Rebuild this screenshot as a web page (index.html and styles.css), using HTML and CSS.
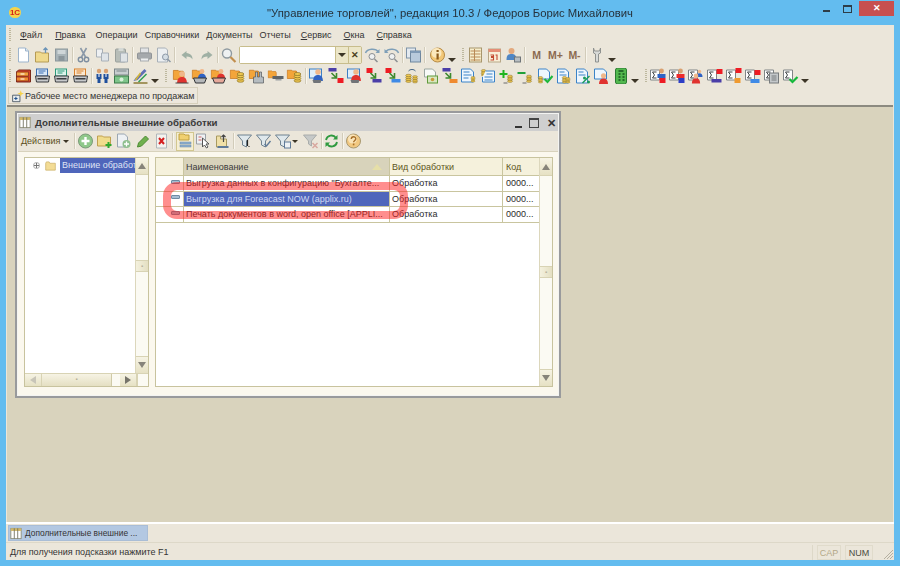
FILE: index.html
```html
<!DOCTYPE html>
<html lang="ru">
<head>
<meta charset="utf-8">
<title>Управление торговлей</title>
<link rel="stylesheet" href="styles.css">
</head>
<body>
<svg class="sprite" xmlns="http://www.w3.org/2000/svg">
<defs>
<symbol id="doc" viewBox="0 0 16 16"><path d="M3 1h7l3 3v11H3z" fill="#fff" stroke="#9db4cc"/><path d="M10 1v3h3" fill="#dfe8f0" stroke="#9db4cc"/></symbol>
<symbol id="open" viewBox="0 0 16 16"><path d="M1 5h5l1 1h7v9H1z" fill="#f0d98c" stroke="#b59a55"/><path d="M11 1v5M9 3l2-2 2 2" fill="none" stroke="#6b94b8" stroke-width="1.3"/></symbol>
<symbol id="save" viewBox="0 0 16 16"><rect x="2" y="2" width="12" height="12" fill="#a9b4b8" stroke="#8c979c"/><rect x="4" y="3" width="8" height="4" fill="#cfd6d8"/><rect x="5" y="9" width="6" height="5" fill="#8b969b"/></symbol>
<symbol id="cut" viewBox="0 0 16 16"><path d="M5 1l5 9M11 1L6 10" stroke="#8b99a8" stroke-width="1.6" fill="none"/><circle cx="5" cy="12.5" r="2.2" fill="none" stroke="#7e8ea0" stroke-width="1.4"/><circle cx="11" cy="12.5" r="2.2" fill="none" stroke="#7e8ea0" stroke-width="1.4"/></symbol>
<symbol id="copy" viewBox="0 0 16 16"><path d="M2 2h6v8H2z" fill="#eef0f2" stroke="#a8b0b8"/><path d="M7 6h7v8H7z" fill="#dfe4e8" stroke="#a8b0b8"/></symbol>
<symbol id="paste" viewBox="0 0 16 16"><rect x="2" y="2" width="10" height="13" rx="1" fill="#b7bdb8" stroke="#9aa09c"/><rect x="5" y="1" width="5" height="3" fill="#d5d9d6"/><path d="M7 6h7v9H7z" fill="#dfe3e6" stroke="#a8b0b8"/></symbol>
<symbol id="print" viewBox="0 0 16 16"><rect x="4" y="1" width="8" height="5" fill="#e2e4e6" stroke="#a7abae"/><rect x="1" y="6" width="14" height="6" rx="1" fill="#a5a9ac" stroke="#909497"/><rect x="4" y="11" width="8" height="3" fill="#eceeef" stroke="#a7abae"/></symbol>
<symbol id="prev" viewBox="0 0 16 16"><path d="M2 1h8l2 2v12H2z" fill="#eceff1" stroke="#a8b0b8"/><circle cx="10" cy="10" r="3" fill="#d4dde4" stroke="#8b98a5"/><path d="M12 12l3 3" stroke="#8b98a5" stroke-width="1.5"/></symbol>
<symbol id="undo" viewBox="0 0 16 16"><path d="M7 4L2 8l5 4V9.500c3 0 5 1 6 3 0-4-2-6-6-6.500z" fill="#9fb0a4"/></symbol>
<symbol id="redo" viewBox="0 0 16 16"><path d="M9 4l5 4-5 4V9.500c-3 0-5 1-6 3 0-4 2-6 6-6.500z" fill="#9fb0a4"/></symbol>
<symbol id="find" viewBox="0 0 16 16"><circle cx="6.500" cy="6.500" r="4.500" fill="#eef1f2" stroke="#8f9aa0" stroke-width="1.400"/><path d="M10 10l5 5" stroke="#c28f4e" stroke-width="2.200"/></symbol>
<symbol id="fnext" viewBox="0 0 16 16"><path d="M1 6a7 5 0 0 1 13-1" fill="none" stroke="#7e9fb8" stroke-width="1.500"/><path d="M15 2v4h-4z" fill="#7e9fb8"/><circle cx="7.500" cy="9.500" r="3" fill="#eef1f2" stroke="#8b8f92"/><path d="M10 12l3 3" stroke="#8b8f92" stroke-width="1.500"/></symbol>
<symbol id="fprev" viewBox="0 0 16 16"><path d="M15 6A7 5 0 0 0 2 5" fill="none" stroke="#7e9fb8" stroke-width="1.500"/><path d="M1 2v4h4z" fill="#7e9fb8"/><circle cx="8.500" cy="9.500" r="3" fill="#eef1f2" stroke="#8b8f92"/><path d="M11 12l3 3" stroke="#8b8f92" stroke-width="1.500"/></symbol>
<symbol id="wins" viewBox="0 0 16 16"><rect x="1" y="1" width="9" height="10" fill="#e4eaf0" stroke="#7f93a8"/><rect x="5" y="4" width="10" height="11" fill="#b8cadb" stroke="#6f879e"/><rect x="5" y="4" width="10" height="2" fill="#7f9ab5"/></symbol>
<symbol id="info" viewBox="0 0 16 16"><circle cx="8" cy="8" r="7" fill="#f2c777" stroke="#b68a44"/><circle cx="7" cy="6" r="5" fill="#fbe8bd"/><rect x="7" y="3" width="2.200" height="2" fill="#8b5a1b"/><rect x="7" y="6.500" width="2.200" height="6" fill="#8b5a1b"/></symbol>
<symbol id="sheet" viewBox="0 0 16 16"><rect x="2" y="1" width="12" height="14" fill="#f6eecd" stroke="#a8966c"/><path d="M3 4h10M3 7h10M3 10h10M3 13h10M7 2v12" stroke="#b98a56"/></symbol>
<symbol id="cal" viewBox="0 0 16 16"><rect x="2" y="2" width="12" height="13" fill="#f8eed8" stroke="#b8a888"/><rect x="2" y="2" width="12" height="3" fill="#e58e76"/><path d="M4 8h3v1.500H5v1h2V13H4M9 8h1.500v5" fill="none" stroke="#c34a32" stroke-width="1.100"/></symbol>
<symbol id="ulock" viewBox="0 0 16 16"><circle cx="6" cy="4" r="3" fill="#e3a97d"/><path d="M1 13c0-5 2-6 5-6s5 1 5 6z" fill="#4f86c4"/><rect x="9" y="10" width="6" height="5" fill="#b8bec2" stroke="#6f7478"/></symbol>
<symbol id="tool" viewBox="0 0 16 16"><path d="M4 1v5l2 1v8h3V7l2-1V1l-1 3H5z" fill="#d8dad8" stroke="#8f9290"/></symbol>

<symbol id="cab" viewBox="0 0 16 16"><path d="M3 2h12v12H1V4z" fill="#d9462a" stroke="#7c2a1a"/><rect x="1" y="4" width="12" height="4" fill="#f2a13c" stroke="#7c2a1a" stroke-width=".7"/><rect x="1" y="9" width="12" height="4" fill="#ef8a2f" stroke="#7c2a1a" stroke-width=".7"/><rect x="5" y="5.500" width="4" height="1" fill="#fff"/><rect x="5" y="10.500" width="4" height="1" fill="#fff"/></symbol>
<symbol id="pr1" viewBox="0 0 16 16"><rect x="2" y="1" width="11" height="7" fill="#d8e8f8" stroke="#3a6db0"/><path d="M4 3h7M4 5h5" stroke="#3a6db0"/><path d="M1 8h14l-1 6H2z" fill="#c7c9cb" stroke="#3a3d40"/><rect x="3" y="10" width="10" height="1.500" fill="#3a3d40"/></symbol>
<symbol id="pr2" viewBox="0 0 16 16"><rect x="2" y="1" width="11" height="7" fill="#dcf3ea" stroke="#2a9a7a"/><path d="M4 3h7M4 5h5" stroke="#2a9a7a"/><path d="M1 8h14l-1 6H2z" fill="#c7c9cb" stroke="#3a3d40"/><rect x="3" y="10" width="10" height="1.500" fill="#3a3d40"/></symbol>
<symbol id="pr3" viewBox="0 0 16 16"><rect x="2" y="1" width="11" height="7" fill="#fbe8d0" stroke="#d9802a"/><path d="M4 3h7M4 5h5" stroke="#d9802a"/><path d="M1 8h14l-1 6H2z" fill="#c7c9cb" stroke="#3a3d40"/><rect x="3" y="10" width="10" height="1.500" fill="#3a3d40"/></symbol>
<symbol id="ppl" viewBox="0 0 16 16"><circle cx="4.500" cy="3" r="2.200" fill="#d9a070"/><circle cx="11.500" cy="3" r="2.200" fill="#d9a070"/><path d="M2 6h5v5H6v4H3v-4H2zM9 6h5v5h-1v4h-3v-4H9z" fill="#1f4f9c"/><path d="M4 6h1v3H4zM11 6h1v3h-1z" fill="#fff"/></symbol>
<symbol id="money" viewBox="0 0 16 16"><rect x="1" y="1" width="14" height="6" fill="#c9ced0" stroke="#7b8588"/><rect x="1" y="8" width="14" height="7" fill="#7fc48a" stroke="#3a7a48"/><circle cx="8" cy="11.500" r="2" fill="#d7f0d8"/><path d="M3 3h10" stroke="#7b8588"/></symbol>
<symbol id="sign" viewBox="0 0 16 16"><path d="M1 13l4-1 9-9-2-2-9 9z" fill="#5f6fb5"/><path d="M6 14l8-8" stroke="#2a9c52" stroke-width="1.500"/><path d="M1 15h14" stroke="#8b7a36" stroke-width="1.500"/><path d="M3 12l5-7" stroke="#d6b834" stroke-width="1.500"/></symbol>
<symbol id="pers" viewBox="0 0 16 16"><circle cx="8" cy="5" r="3.400" fill="#f0b78a"/><path d="M2 16c0-5 2-7.500 6-7.500s6 2.500 6 7.500z" fill="#e0332f"/></symbol>
<symbol id="persb" viewBox="0 0 16 16"><circle cx="8" cy="5" r="3.400" fill="#f0b78a"/><path d="M2 16c0-5 2-7.500 6-7.500s6 2.500 6 7.500z" fill="#2f62c4"/></symbol>
<symbol id="fold" viewBox="0 0 16 16"><path d="M1 3h6l1 1h5l1 2v8H1z" fill="#f3a53a" stroke="#c97a20"/></symbol>
<symbol id="coins" viewBox="0 0 16 16"><g fill="#f0c850" stroke="#7a6420" stroke-width=".8"><ellipse cx="8" cy="13" rx="4.500" ry="2"/><ellipse cx="8" cy="10" rx="4.500" ry="2"/><ellipse cx="8" cy="7" rx="4.500" ry="2"/><ellipse cx="8" cy="4" rx="4.500" ry="2"/></g></symbol>
<symbol id="a1" viewBox="0 0 16 16"><use href="#fold" width="13" height="13"/><use href="#pers" x="3" y="2" width="13" height="13"/><path d="M3 15h13" stroke="#444"/></symbol>
<symbol id="a2" viewBox="0 0 16 16"><use href="#fold" width="12" height="12"/><use href="#persb" x="5" y="0" width="11" height="11"/><path d="M2 10h13l-2 5H4z" fill="#b5b8ba" stroke="#303336"/></symbol>
<symbol id="a3" viewBox="0 0 16 16"><use href="#fold" width="12" height="12"/><use href="#pers" x="5" y="0" width="11" height="11"/><path d="M2 10h13l-2 5H4z" fill="#e6a89a" stroke="#303336"/></symbol>
<symbol id="a4" viewBox="0 0 16 16"><use href="#fold" width="12" height="12"/><use href="#coins" x="5" y="3" width="12" height="12"/></symbol>
<symbol id="a5" viewBox="0 0 16 16"><use href="#fold" width="12" height="12"/><path d="M5 15V9h2V4h2v5h2V4h2v5h2v6z" fill="#b5bcc0" stroke="#54595c" stroke-width=".7"/></symbol>
<symbol id="a6" viewBox="0 0 16 16"><use href="#fold" width="10" height="12"/><rect x="5" y="8" width="11" height="3" fill="#5e6468"/><rect x="8" y="11" width="6" height="1.500" fill="#9da2a6"/></symbol>
<symbol id="b1" viewBox="0 0 16 16"><rect x="1" y="1" width="12" height="9" fill="#dfeefa" stroke="#3d7fc4"/><use href="#persb" x="3" y="0" width="13" height="13"/><path d="M4 12h9l-1 3H5z" fill="#707478"/></symbol>
<symbol id="b2" viewBox="0 0 16 16"><rect x="1" y="0" width="8" height="3.500" fill="#4b3ea8"/><path d="M4 5l5 5M9 5v5H4" fill="none" stroke="#3d8a2f" stroke-width="1.600"/><rect x="10" y="10" width="6" height="5" fill="#ee1c24"/></symbol>
<symbol id="b3" viewBox="0 0 16 16"><rect x="1" y="1" width="12" height="9" fill="#dfeefa" stroke="#3d7fc4"/><use href="#pers" x="3" y="0" width="13" height="13"/><path d="M4 12h9l-1 3H5z" fill="#707478"/></symbol>
<symbol id="b4" viewBox="0 0 16 16"><rect x="1" y="0" width="6" height="5" fill="#ee1c24"/><path d="M5 5l5 5M10 5v5H5" fill="none" stroke="#3d8a2f" stroke-width="1.600"/><rect x="7" y="11" width="9" height="3.500" fill="#4b3ea8"/></symbol>
<symbol id="b5" viewBox="0 0 16 16"><rect x="1" y="0" width="6" height="5" fill="#ee1c24"/><path d="M5 5l5 5M10 5v5H5" fill="none" stroke="#3d8a2f" stroke-width="1.600"/><rect x="7" y="11" width="9" height="3.500" fill="#3f8ae6"/></symbol>
<symbol id="b6" viewBox="0 0 16 16"><path d="M5 3a4 3 0 0 1 7 0" fill="none" stroke="#4a6a88"/><use href="#coins" x="0" y="4" width="10" height="12"/><use href="#coins" x="7" y="6" width="9" height="10"/></symbol>
<symbol id="b7" viewBox="0 0 16 16"><path d="M2 1h8l3 3v5H2z" fill="#f8faf8" stroke="#9aa6a0"/><rect x="5" y="8" width="10" height="7" fill="#d8e6c0" stroke="#5f9a3a"/><circle cx="10" cy="11.500" r="1.800" fill="#c89a3a"/></symbol>
<symbol id="b8" viewBox="0 0 16 16"><rect x="1" y="0" width="8" height="3.500" fill="#4b3ea8"/><path d="M4 5l5 5M9 5v5H4" fill="none" stroke="#3d8a2f" stroke-width="1.600"/><rect x="8" y="11" width="8" height="4" fill="#ef8a2f"/></symbol>
<symbol id="d1" viewBox="0 0 16 16"><path d="M1 1h9l3 3v10H1z" fill="#eef6fd" stroke="#3b83c8"/><path d="M3 4h6M3 7h8M3 10h5" stroke="#3b83c8"/><use href="#coins" x="9" y="7" width="7" height="8"/></symbol>
<symbol id="d2" viewBox="0 0 16 16"><use href="#coins" x="0" y="0" width="8" height="9"/><path d="M6 3h9v11H3V9" fill="#eef6fd" stroke="#3b83c8"/><path d="M7 6h6M5 9h8M5 12h8" stroke="#3b83c8"/></symbol>
<symbol id="d3" viewBox="0 0 16 16"><path d="M1 5h3V2h2v3h3v2H6v3H4V7H1z" fill="#1fb51f"/><use href="#coins" x="7" y="5" width="9" height="11"/><path d="M5 15h4" stroke="#6a6a6a"/></symbol>
<symbol id="d4" viewBox="0 0 16 16"><rect x="0" y="4" width="8" height="2" fill="#1fa03a"/><use href="#coins" x="7" y="5" width="9" height="11"/><path d="M5 15h4" stroke="#6a6a6a"/></symbol>
<symbol id="d5" viewBox="0 0 16 16"><path d="M2 1h8l3 3v7H2z" fill="#eef6fd" stroke="#3b83c8"/><use href="#coins" x="0" y="7" width="8" height="9"/><path d="M8 11l3 3 5-6" fill="none" stroke="#1eb83c" stroke-width="2"/></symbol>
<symbol id="d6" viewBox="0 0 16 16"><path d="M2 1h8l3 3v11H2z" fill="#eef6fd" stroke="#3b83c8"/><path d="M4 4h5M4 7h7" stroke="#3b83c8"/><use href="#coins" x="5" y="7" width="8" height="9"/><use href="#coins" x="9" y="8" width="7" height="8"/></symbol>
<symbol id="d7" viewBox="0 0 16 16"><path d="M2 1h8l3 3v11H2z" fill="#eef6fd" stroke="#3b83c8"/><path d="M4 4h5M4 7h7" stroke="#3b83c8"/><path d="M8 15l7-7" stroke="#1a9a5a" stroke-width="1.500"/><circle cx="10" cy="10" r="1.500" fill="#1a9a5a"/><circle cx="14" cy="14" r="1.500" fill="#1a9a5a"/></symbol>
<symbol id="d8" viewBox="0 0 16 16"><path d="M1 1h9l3 3v7H1z" fill="#eef6fd" stroke="#3b83c8"/><use href="#pers" x="4" y="4" width="12" height="12"/></symbol>
<symbol id="grn" viewBox="0 0 16 16"><rect x="3" y="0" width="11" height="16" rx="2" fill="#52b84e" stroke="#2a7a32"/><path d="M6 3h5M6 6h2M10 6h2M6 9h2M10 9h2M6 12h2M10 12h2" stroke="#19541f" stroke-width="1.300"/></symbol>
<symbol id="s0" viewBox="0 0 16 16"><path d="M1 2h9v10H1z" fill="#fdfdfd" stroke="#7f8486"/><path d="M7 4H3l2 3-2 3h4" fill="none" stroke="#404446"/></symbol>
<symbol id="s1" viewBox="0 0 16 16"><use href="#s0"/><circle cx="12" cy="3" r="2.400" fill="#d9a070"/><path d="M8 6h8v4H8z" fill="#2d63c6"/><rect x="10" y="10" width="6" height="5" fill="#ee1c24"/></symbol>
<symbol id="s2" viewBox="0 0 16 16"><use href="#s0"/><circle cx="12" cy="3" r="2.400" fill="#d9a070"/><path d="M8 6h8v4H8z" fill="#ee2c2c"/><rect x="10" y="10" width="6" height="5" fill="#2d3ec6"/></symbol>
<symbol id="s3" viewBox="0 0 16 16"><use href="#s0"/><use href="#persb" x="8" y="0" width="8" height="10"/><use href="#pers" x="3" y="4" width="11" height="12"/></symbol>
<symbol id="s4" viewBox="0 0 16 16"><use href="#s0"/><rect x="10" y="1" width="6" height="5" fill="#ee1c24"/><rect x="5" y="11" width="10" height="3.500" fill="#4b3ea8"/></symbol>
<symbol id="s5" viewBox="0 0 16 16"><use href="#s0"/><rect x="10" y="0" width="6" height="5" fill="#ee1c24"/><rect x="9" y="10" width="6" height="5" fill="#ef9a2f"/></symbol>
<symbol id="s6" viewBox="0 0 16 16"><use href="#s0"/><rect x="10" y="2" width="6" height="5" fill="#ee1c24"/><rect x="6" y="11" width="9" height="4" fill="#3f8ae6"/></symbol>
<symbol id="s7" viewBox="0 0 16 16"><use href="#s0"/><rect x="6" y="5" width="9" height="10" fill="#c4c8ca" stroke="#777b7d"/><path d="M8 8h5M8 10h5M8 12h5" stroke="#777b7d"/></symbol>
<symbol id="s8" viewBox="0 0 16 16"><use href="#s0"/><path d="M7 11l3 3 5-5" fill="none" stroke="#14b83a" stroke-width="2.200"/></symbol>

<symbol id="grid" viewBox="0 0 14 14"><rect x="1" y="1" width="12" height="12" fill="#fff" stroke="#8a8a72"/><rect x="1" y="1" width="12" height="3" fill="#d2b866"/><path d="M5 1v12M9 1v12" stroke="#6f6f5c"/></symbol>
<symbol id="wadd" viewBox="0 0 16 16"><circle cx="8" cy="8" r="7" fill="#8fc88a" stroke="#7a9a78"/><path d="M8 4v8M4 8h8" stroke="#fff" stroke-width="2.400"/></symbol>
<symbol id="wfadd" viewBox="0 0 16 16"><path d="M1 3h5l1 1h7v9H1z" fill="#f0dc8c" stroke="#c0a050"/><path d="M12 9v6M9 12h6" stroke="#2fa82f" stroke-width="2"/></symbol>
<symbol id="wcopy" viewBox="0 0 16 16"><path d="M2 1h7l3 3v10H2z" fill="#eef1f4" stroke="#9aa6b2"/><circle cx="11" cy="11" r="4" fill="#8fbf8f"/><path d="M11 8.500v5M8.500 11h5" stroke="#fff" stroke-width="1.300"/></symbol>
<symbol id="wedit" viewBox="0 0 16 16"><path d="M3 14l1-4 7-7 3 3-7 7z" fill="#6fb04e" stroke="#4d8a34"/></symbol>
<symbol id="wdel" viewBox="0 0 16 16"><path d="M3 1h10v14H3z" fill="#f3f3ef" stroke="#b0b6ba"/><path d="M5.500 5l5 6M10.500 5l-5 6" stroke="#d42020" stroke-width="2"/></symbol>
<symbol id="wtree" viewBox="0 0 16 16"><path d="M2 1h5l1 1h4v5H2z" fill="#f0d070" stroke="#c0a040"/><rect x="3" y="9" width="11" height="2" fill="#8fb0d0" stroke="#6a88a8" stroke-width=".5"/><rect x="3" y="12" width="11" height="2" fill="#8fb0d0" stroke="#6a88a8" stroke-width=".5"/></symbol>
<symbol id="wsel" viewBox="0 0 16 16"><path d="M1 1h9v10H1z" fill="#eef0f2" stroke="#9aa0a6"/><path d="M3 4h3M3 7h3" stroke="#d06060"/><path d="M7 5v9l2-2 2 3 1.500-1-2-3h3z" fill="#fff" stroke="#555"/></symbol>
<symbol id="wup" viewBox="0 0 16 16"><path d="M2 3h4v3h6v8H2z" fill="#f0e0a8" stroke="#a89a60"/><path d="M9 9V2M7 4l2-2 2 2" fill="none" stroke="#444" stroke-width="1.200"/><rect x="3" y="13" width="11" height="2" fill="#5f7a98"/></symbol>
<symbol id="wf1" viewBox="0 0 16 16"><path d="M1 2h14l-5 6v6l-4-2V8z" fill="#dfe8ec" stroke="#6f8290"/><path d="M11 7v6" stroke="#222" stroke-width="1.200"/><path d="M12.500 13v1" stroke="#222"/></symbol>
<symbol id="wf2" viewBox="0 0 16 16"><path d="M1 2h14l-5 6v6l-4-2V8z" fill="#dfe8ec" stroke="#6f8290"/><path d="M9 11l2 2 4-5" fill="none" stroke="#5f7a98" stroke-width="1.400"/></symbol>
<symbol id="wf3" viewBox="0 0 16 16"><path d="M1 2h14l-5 6v6l-4-2V8z" fill="#dfe8ec" stroke="#6f8290"/><rect x="10" y="9" width="6" height="6" fill="#eef2f4" stroke="#5f7a98"/></symbol>
<symbol id="wf4" viewBox="0 0 16 16"><path d="M1 2h13L9 8v5l-3-2V8z" fill="#c6c9c8" stroke="#a8acab"/><path d="M10 10l5 5M15 10l-5 5" stroke="#d8a8a0" stroke-width="1.500"/></symbol>
<symbol id="wref" viewBox="0 0 16 16"><path d="M2.500 7a5.500 5.500 0 0 1 10-2M13.500 9a5.500 5.500 0 0 1-10 2" fill="none" stroke="#2f9a3f" stroke-width="1.800"/><path d="M14 2v4.500H9.500zM2 14V9.500h4.500z" fill="#2f9a3f"/></symbol>
<symbol id="whelp" viewBox="0 0 16 16"><circle cx="8" cy="8" r="7" fill="#f2c880" stroke="#a89870"/><circle cx="7" cy="6" r="4.500" fill="#fae4b8"/><path d="M5.800 6c0-3 4.500-3 4.500-.3 0 1.800-2.200 1.800-2.200 3.600" fill="none" stroke="#a8702a" stroke-width="1.400"/><rect x="7.300" y="10.500" width="1.600" height="1.800" fill="#a8702a"/></symbol>
<symbol id="folder" viewBox="0 0 16 14"><path d="M1 3l1-2h4l1 2h8v10H1z" fill="#f3dc95" stroke="#c9ae63"/></symbol>
</defs>
</svg>

<div class="app">
  <header class="title">
    <span class="logo">1С</span>
    <span class="title-text">"Управление торговлей", редакция 10.3 / Федоров Борис Михайлович</span>
    <div class="wc">
      <span class="wc-min"></span>
      <span class="wc-max"></span>
      <span class="wc-close">✕</span>
    </div>
  </header>

  <div class="shell">
    <nav class="menu">
      <span class="handle"></span>
      <span class="mi mi-file"><u>Ф</u>айл</span>
      <span class="mi mi-edit"><u>П</u>равка</span>
      <span class="mi">Операции</span>
      <span class="mi">Справочники</span>
      <span class="mi">Документы</span>
      <span class="mi mi-rep">Отчеты</span>
      <span class="mi mi-win"><u>С</u>ервис</span>
      <span class="mi mi-win"><u>О</u>кна</span>
      <span class="mi mi-win"><u>С</u>правка</span>
    </nav>

    <div class="tb tb1">
      <span class="handle"></span>
      <svg class="b"><use href="#doc"/></svg>
      <svg class="b"><use href="#open"/></svg>
      <svg class="b"><use href="#save"/></svg>
      <span class="sep"></span>
      <svg class="b"><use href="#cut"/></svg>
      <svg class="b"><use href="#copy"/></svg>
      <svg class="b"><use href="#paste"/></svg>
      <span class="sep sep-1"></span>
      <svg class="b"><use href="#print"/></svg>
      <svg class="b"><use href="#prev"/></svg>
      <span class="sep sep-2"></span>
      <svg class="b"><use href="#undo"/></svg>
      <svg class="b"><use href="#redo"/></svg>
      <span class="sep"></span>
      <svg class="b"><use href="#find"/></svg>
      <div class="combo">
        <span class="combo-in"></span>
        <span class="combo-btn"><i class="arr"></i></span>
        <span class="combo-btn combo-x">✕</span>
      </div>
      <svg class="b"><use href="#fnext"/></svg>
      <svg class="b"><use href="#fprev"/></svg>
      <span class="sep"></span>
      <svg class="b"><use href="#wins"/></svg>
      <span class="sep sep-2"></span>
      <svg class="b"><use href="#info"/></svg>
      <span class="more"><i class="arr"></i></span>
      <span class="handle handle-mid h-2"></span>
      <svg class="b"><use href="#sheet"/></svg>
      <svg class="b"><use href="#cal"/></svg>
      <svg class="b"><use href="#ulock"/></svg>
      <span class="sep sep-1"></span>
      <span class="mem">М</span>
      <span class="mem">М+</span>
      <span class="mem">М-</span>
      <span class="sep sep-1"></span>
      <svg class="b"><use href="#tool"/></svg>
      <span class="more"><i class="arr"></i></span>
    </div>

    <div class="tb tb2">
      <span class="handle"></span>
      <svg class="b"><use href="#cab"/></svg>
      <svg class="b"><use href="#pr1"/></svg>
      <svg class="b"><use href="#pr2"/></svg>
      <svg class="b"><use href="#pr3"/></svg>
      <span class="sep"></span>
      <svg class="b"><use href="#ppl"/></svg>
      <svg class="b"><use href="#money"/></svg>
      <svg class="b"><use href="#sign"/></svg>
      <span class="more"><i class="arr"></i></span>
      <span class="handle handle-mid h-4"></span>
      <svg class="b"><use href="#a1"/></svg>
      <svg class="b"><use href="#a2"/></svg>
      <svg class="b"><use href="#a3"/></svg>
      <svg class="b"><use href="#a4"/></svg>
      <svg class="b"><use href="#a5"/></svg>
      <svg class="b"><use href="#a6"/></svg>
      <svg class="b"><use href="#a4"/></svg>
      <span class="sep"></span>
      <svg class="b"><use href="#b1"/></svg>
      <svg class="b"><use href="#b2"/></svg>
      <svg class="b"><use href="#b3"/></svg>
      <svg class="b"><use href="#b4"/></svg>
      <svg class="b"><use href="#b5"/></svg>
      <svg class="b"><use href="#b6"/></svg>
      <svg class="b"><use href="#b7"/></svg>
      <svg class="b"><use href="#b8"/></svg>
      <svg class="b"><use href="#d1"/></svg>
      <svg class="b"><use href="#d2"/></svg>
      <svg class="b"><use href="#d3"/></svg>
      <svg class="b"><use href="#d4"/></svg>
      <svg class="b"><use href="#d5"/></svg>
      <svg class="b"><use href="#d6"/></svg>
      <svg class="b"><use href="#d7"/></svg>
      <svg class="b"><use href="#d8"/></svg>
      <svg class="b"><use href="#grn"/></svg>
      <span class="more"><i class="arr"></i></span>
      <span class="handle handle-mid h-1"></span>
      <svg class="b"><use href="#s1"/></svg>
      <svg class="b"><use href="#s2"/></svg>
      <svg class="b"><use href="#s3"/></svg>
      <svg class="b"><use href="#s4"/></svg>
      <svg class="b"><use href="#s5"/></svg>
      <svg class="b"><use href="#s6"/></svg>
      <svg class="b"><use href="#s7"/></svg>
      <svg class="b"><use href="#s8"/></svg>
      <span class="more"><i class="arr"></i></span>
    </div>

    <div class="tabs">
      <div class="tab">
        <svg class="tab-ic" viewBox="0 0 16 16"><path d="M2 7h9v8H2z" fill="#e8ecee" stroke="#3c4a58"/><path d="M6 9v4M4 11h4" stroke="#1f4f8c" stroke-width="1.300"/><path d="M12 1l1 3 3 1-3 1-1 3-1-3-3-1 3-1z" fill="#f6d24a"/></svg>
        Рабочее место менеджера по продажам
      </div>
    </div>

    <main class="desk">
      <section class="win">
        <div class="win-title">
          <svg class="win-ic"><use href="#grid"/></svg>
          <span class="win-name">Дополнительные внешние обработки</span>
          <span class="wb-min"></span>
          <span class="wb-max"></span>
          <span class="wb-close">✕</span>
        </div>
        <div class="win-tb">
          <span class="actions">Действия <i class="arr arr-sm"></i></span>
          <span class="sep"></span>
          <svg class="b"><use href="#wadd"/></svg>
          <svg class="b"><use href="#wfadd"/></svg>
          <svg class="b"><use href="#wcopy"/></svg>
          <svg class="b"><use href="#wedit"/></svg>
          <svg class="b"><use href="#wdel"/></svg>
          <span class="sep"></span>
          <span class="pressed"><svg class="b"><use href="#wtree"/></svg></span>
          <svg class="b"><use href="#wsel"/></svg>
          <svg class="b"><use href="#wup"/></svg>
          <span class="sep"></span>
          <svg class="b"><use href="#wf1"/></svg>
          <svg class="b"><use href="#wf2"/></svg>
          <svg class="b"><use href="#wf3"/></svg>
          <i class="arr arr-sm"></i>
          <svg class="b wf4"><use href="#wf4"/></svg>
          <span class="sep"></span>
          <svg class="b wref"><use href="#wref"/></svg>
          <span class="sep"></span>
          <svg class="b"><use href="#whelp"/></svg>
        </div>

        <div class="win-body">
          <div class="tree">
            <div class="tree-main">
              <div class="tree-area">
                <div class="tree-row">
                  <span class="plus"></span>
                  <svg class="folder"><use href="#folder"/></svg>
                  <span class="tree-sel">Внешние обработки</span>
                </div>
              </div>
              <div class="vs vs-tree">
                <span class="vs-btn"><i class="tri-up"></i></span>
                <span class="vs-track vs-a"></span>
                <span class="vs-thumb"><b>▪</b></span>
                <span class="vs-track"></span>
                <span class="vs-btn vs-btn-d"><i class="tri-down"></i></span>
              </div>
            </div>
            <div class="hs">
              <span class="hs-btn"><i class="tri-left"></i></span>
              <span class="hs-thumb"><b>▪</b></span>
              <span class="hs-track"></span>
              <span class="hs-btn"><i class="tri-right"></i></span>
              <span class="hs-corner"></span>
            </div>
          </div>

          <div class="list">
            <div class="list-main">
              <div class="grid">
                <div class="row head">
                  <span class="c c0"></span>
                  <span class="c c1 sorted">Наименование<i class="sort"></i></span>
                  <span class="c c2">Вид обработки</span>
                  <span class="c c3">Код</span>
                </div>
                <div class="row">
                  <span class="c c0"><i class="mark"></i></span>
                  <span class="c c1">Выгрузка данных в конфигурацию "Бухгалте...</span>
                  <span class="c c2">Обработка</span>
                  <span class="c c3">0000...</span>
                </div>
                <div class="row r2">
                  <span class="c c0"><i class="mark"></i></span>
                  <span class="c c1 sel">Выгрузка для Foreacast NOW (applix.ru)</span>
                  <span class="c c2">Обработка</span>
                  <span class="c c3">0000...</span>
                </div>
                <div class="row">
                  <span class="c c0"><i class="mark"></i></span>
                  <span class="c c1">Печать документов в word, open office [APPLI...</span>
                  <span class="c c2">Обработка</span>
                  <span class="c c3">0000...</span>
                </div>
              </div>
              <div class="vs vs-list">
                <span class="vs-btn vs-btn-h"><i class="tri-up"></i></span>
                <span class="vs-track vs-b"></span>
                <span class="vs-thumb"><b>▪</b></span>
                <span class="vs-track"></span>
                <span class="vs-btn vs-btn-d"><i class="tri-down"></i></span>
              </div>
            </div>
          </div>
        </div>
        <div class="ring"></div>
      </section>
    </main>

    <div class="taskbar">
      <div class="task">
        <svg class="win-ic"><use href="#grid"/></svg>
        Дополнительные внешние ...
      </div>
    </div>
    <footer class="status">
      <span class="st-text">Для получения подсказки нажмите F1</span>
      <span class="st-box st-cap">CAP</span>
      <span class="st-box st-num">NUM</span>
      <svg class="grip" viewBox="0 0 12 12"><path d="M11 2L2 11M11 5l-6 6M11 8l-3 3" stroke="#b5b0a0" stroke-width="1"/></svg>
    </footer>
  </div>
</div>
</body>
</html>
```

FILE: styles.css
```css
* { box-sizing: border-box; }
html, body { margin: 0; padding: 0; }
body {
  width: 900px;
  height: 566px;
  overflow: hidden;
  background: #63bcef;
  font-family: "Liberation Sans", Arial, sans-serif;
  font-size: 9px;
  color: #2b2b2b;
}
.sprite { position: absolute; width: 0; height: 0; }

.app { display: flex; flex-direction: column; height: 566px; filter: blur(.35px); }

/* title bar */
.title {
  height: 25px;
  display: flex;
  align-items: center;
  justify-content: center;
  position: relative;
}
.title-text { font-size: 11.3px; color: #26323c; }
.logo {
  position: absolute;
  left: 9px;
  top: 7px;
  width: 12px;
  height: 11px;
  border-radius: 6px;
  background: #f5d44c;
  color: #d5221a;
  font-size: 8px;
  font-weight: bold;
  line-height: 11px;
  text-align: center;
}
.wc {
  position: absolute;
  right: 6px;
  top: 0;
  display: flex;
  align-items: flex-start;
}
.wc-min { width: 7px; height: 2px; background: #2d3d48; margin: 10px 13px 0 0; }
.wc-max { width: 9px; height: 8px; border: 1px solid #2d3d48; border-top-width: 2px; margin: 5px 7px 0 0; }
.wc-close {
  width: 35px;
  height: 15px;
  margin-top: 1px;
  background: #c75050;
  color: #fff;
  font-size: 9px;
  font-weight: bold;
  line-height: 15px;
  text-align: center;
}

/* main shell */
.shell {
  margin: 0 6px 6px 6px;
  height: 535px;
  background: #ebe6da;
  display: flex;
  flex-direction: column;
}

.menu { height: 20px; display: flex; align-items: center; padding-left: 3px; }
.mi { padding: 0 3.5px; color: #333; white-space: nowrap; }
.mi u { text-decoration: underline; }
.mi-file { margin-left: 5.5px; margin-right: 6px; }
.mi-edit { margin-right: 3px; }
.mi-rep { margin-right: 3px; }
.mi-win { margin-right: 5px; }

.handle {
  flex: none;
  width: 2px;
  height: 14px;
  background-image: linear-gradient(#bdb89e 50%, transparent 50%);
  background-size: 2px 2px;
}
.handle-mid { margin-left: 5px; }
.h-1 { margin-right: 1px; }
.h-2 { margin-right: 2px; }
.h-4 { margin-right: 4px; }

.tb { height: 21px; display: flex; align-items: center; padding-left: 3px; }
.tb > .handle:first-child { margin-right: 3px; }
.b { flex: none; width: 19px; height: 16px; }
.sep { flex: none; width: 1px; height: 16px; background: #d2ccba; margin: 0 1px; box-shadow: 1px 0 #f8f5ec; }
.sep-1 { margin-right: 2px; }
.sep-2 { margin-right: 3px; }
.more { flex: none; width: 10px; height: 16px; display: flex; align-items: flex-end; justify-content: center; padding-bottom: 1px; }
.arr { display: block; width: 0; height: 0; border: 4px solid transparent; border-bottom: 0; border-top: 4px solid #3c3526; }
.arr-sm { display: inline-block; flex: none; width: 6px; border-width: 3px; border-bottom: 0; border-top: 3px solid #3c3526; vertical-align: middle; }

.combo { display: flex; flex: none; height: 18px; margin: 0 1px; border: 1px solid #c8bd8c; border-radius: 2px; width: 123px; }
.combo-in { width: 97px; background: #fff; }
.combo-btn {
  width: 13px;
  background: #ece6c8;
  border-left: 1px solid #c8bd8c;
  display: flex;
  align-items: center;
  justify-content: center;
  color: #4a4020;
  font-size: 9px;
  font-weight: bold;
}
.combo-x { border-left: 1px solid #c8bd8c; }
.mem { flex: none; width: 19px; text-align: center; font-size: 10.5px; font-weight: bold; color: #8b6a50; white-space: nowrap; }

.tabs { height: 19px; padding: 1px 0 0 2px; display: flex; align-items: flex-start; }
.tab {
  height: 17px;
  width: 190px;
  display: flex;
  align-items: center;
  gap: 1px;
  padding-left: 2px;
  background: #ece7dc;
  border: 1px solid #d6d0bc;
  white-space: nowrap;
  color: #333;
}
.tab-ic { width: 13px; height: 14px; flex: none; }

/* desktop */
.desk {
  flex: none;
  height: 417px;
  margin: 0 1px;
  background: #d9d3bd;
  border-top: 2px solid #8c8a80;
  position: relative;
}
.win {
  position: absolute;
  left: 8px;
  top: 4px;
  width: 546px;
  height: 287px;
  background: #fbf8ee;
  border: 2px solid #999a9c;
  box-shadow: inset 0 0 0 1px #f4f4f2;
  padding: 1px;
}
.win-title {
  height: 17px;
  background: #cfcfcf;
  display: flex;
  align-items: center;
  padding-left: 1px;
}
.win-ic { width: 12px; height: 13px; flex: none; }
.win-name { margin-left: 4px; flex: 1; font-weight: bold; color: #3a3a3a; font-size: 9.7px; }
.wb-min { width: 7px; height: 2px; background: #333; margin: 9px 7px 0 0; }
.wb-max { width: 10px; height: 10px; border: 1px solid #444; border-top-width: 2px; margin-right: 7px; }
.wb-close { width: 11px; margin-right: 1px; text-align: center; color: #333; font-weight: bold; font-size: 11px; line-height: 14px; }

.win-tb {
  height: 21px;
  background: #ebe6da;
  border-bottom: 1px solid #d8d2bc;
  display: flex;
  align-items: center;
  padding-left: 3px;
}
.actions { width: 52px; flex: none; color: #5b4f20; white-space: nowrap; }
.pressed { display: flex; flex: none; height: 19px; align-items: center; background: #f5eed4; border: 1px solid #d2c78f; margin-left: 2px; }
.pressed .b { width: 16px; }
.wf4 { margin-left: 3px; }
.wref { margin-left: -1px; }

.win-body { display: flex; gap: 6px; padding: 5px 0 0 6px; }

.tree, .list { border: 1px solid #c8c39e; background: #fff; height: 230px; flex: none; }
.tree { width: 125px; display: flex; flex-direction: column; }
.list { width: 398px; }
.tree-main, .list-main { display: flex; flex: 1; height: 100%; }
.tree-main { height: 215px; flex: none; }
.tree-area { flex: 1; min-width: 0; overflow: hidden; }
.tree-row { height: 15px; display: flex; align-items: center; padding-left: 8px; white-space: nowrap; }
.plus {
  width: 7px;
  height: 7px;
  border: 1px solid #aaa;
  border-radius: 50%;
  flex: none;
  background:
    linear-gradient(#777, #777) center / 5px 1px no-repeat,
    linear-gradient(#777, #777) center / 1px 5px no-repeat;
}
.folder { width: 11px; height: 10px; margin: 0 4px 0 5px; flex: none; }
.tree-sel { background: #4f66bb; color: #dfe4f5; padding: 0 2px; line-height: 15px; display: block; }

.vs { width: 13px; flex: none; display: flex; flex-direction: column; background: #fbfaf3; border-left: 1px solid #dcd7bc; }
.vs-track { flex: 1; background: #fbfaf3; }
.vs-a { flex: 0 0 85px; }
.vs-b { flex: 0 0 90px; }
.vs-btn {
  height: 17px;
  flex: none;
  display: flex;
  align-items: center;
  justify-content: center;
  background: linear-gradient(#f6f3e4, #e6e1c4);
  border-bottom: 1px solid #d8d3b4;
}
.vs-btn-d { border-top: 1px solid #d8d3b4; border-bottom: 0; }
.vs-btn-h { height: 18px; }
.vs-thumb {
  height: 12px;
  flex: none;
  background: linear-gradient(90deg, #f4f1de, #e4dfc2);
  border-top: 1px solid #d8d3b4;
  border-bottom: 1px solid #d8d3b4;
  color: #b5b09a;
  font-size: 6px;
  line-height: 10px;
  text-align: center;
}
.vs-thumb b, .hs-thumb b { font-weight: normal; }
.tri-up { width: 0; height: 0; border: 4px solid transparent; border-top: 0; border-bottom: 6px solid #86837a; }
.tri-down { width: 0; height: 0; border: 4px solid transparent; border-bottom: 0; border-top: 6px solid #86837a; }
.tri-left { width: 0; height: 0; border: 4px solid transparent; border-left: 0; border-right: 6px solid #c8c5b8; }
.tri-right { width: 0; height: 0; border: 4px solid transparent; border-right: 0; border-left: 6px solid #76746a; }

.hs { height: 13px; flex: none; display: flex; background: #fbfaf3; border-top: 1px solid #d8d3b4; }
.hs-btn { width: 17px; flex: none; display: flex; align-items: center; justify-content: center; background: linear-gradient(#f6f3e4, #e6e1c4); border-right: 1px solid #d8d3b4; }
.hs-thumb { width: 70px; flex: none; text-align: center; background: linear-gradient(#f6f3e4, #e4dfc2); border-right: 1px solid #cfcaa8; color: #b5b09a; font-size: 6px; line-height: 11px; }
.hs-track { width: 8px; flex: none; }
.hs-corner { flex: 1; border-left: 1px solid #d8d3b4; }

.grid { flex: 1; display: flex; flex-direction: column; min-width: 0; }
.row { display: flex; height: 15.500px; border-bottom: 1px solid #c9c59f; }
.head { height: 18px; background: #f5f1dc; }
.c { display: block; padding-left: 2px; line-height: 15px; white-space: nowrap; overflow: hidden; border-right: 1px solid #c9c59f; flex: none; }
.head .c { line-height: 18px; color: #5d5520; }
.c0 { width: 27px; padding: 0; display: flex; align-items: center; justify-content: flex-end; border-right: 0; }
.c1 { width: 207px; position: relative; }
.c2 { width: 113px; }
.c3 { width: 37px; border-right: 0; padding-left: 3px; }
.sorted { background: #d8d3bb; color: #3c3c3c !important; border-left: 1px solid #c9c59f; }
.sort { position: absolute; right: 7px; top: 6px; width: 0; height: 0; border: 5px solid transparent; border-top: 0; border-bottom: 6px solid #e6dfa8; }
.mark { display: block; width: 9px; height: 4px; border-radius: 1px; background: #a5bdd2; border: 1px solid #6f8ba3; margin: -3px 3px 0 0; }
.row .c1:not(.sorted) { border-left: 1px solid #c9c59f; }
.sel { background: #4f66bb; color: #cfd8f2; }

.ring {
  position: absolute;
  left: 146px;
  top: 69px;
  width: 245px;
  height: 37px;
  border: 8.500px solid rgba(255, 30, 30, .5);
  border-radius: 14px;
  pointer-events: none;
}

/* bottom */
.taskbar { height: 20px; flex: none; border-top: 2px solid #fff; padding: 1px 0 0 2px; }
.task {
  width: 140px;
  height: 16px;
  background: #b3c8e2;
  border: 1px solid #a9bdd6;
  display: flex;
  align-items: center;
  gap: 3px;
  white-space: nowrap;
  padding-left: 1px;
  color: #333;
  font-size: 8.4px;
}
.status {
  flex: 1;
  display: flex;
  align-items: center;
  padding: 2px 0 0 4px;
  border-top: 1px solid #ddd8c8;
  position: relative;
}
.st-text { width: 803px; flex: none; height: 15px; line-height: 14px; border-right: 1px solid #ddd8c8; color: #333; }
.st-box { flex: none; height: 15px; line-height: 14px; text-align: center; border: 1px solid #e0dbcb; }
.st-cap { width: 24px; margin-left: 4px; color: #b3a888; }
.st-num { width: 28px; margin-left: 4px; color: #4a4a40; }
.grip { position: absolute; right: 0; bottom: 0; width: 12px; height: 12px; }
```
